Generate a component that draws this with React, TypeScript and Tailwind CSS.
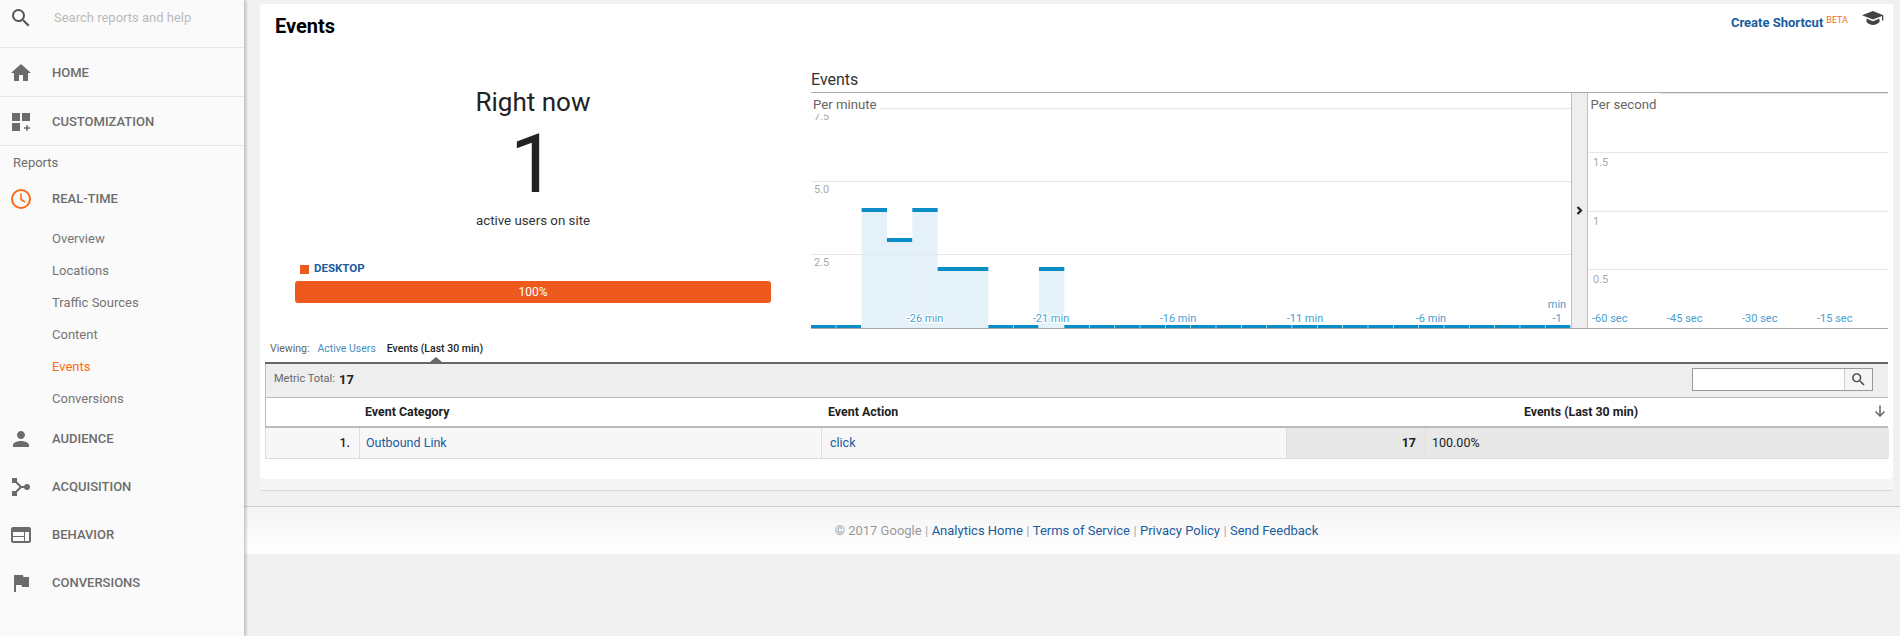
import { MdSearch, MdHome, MdPerson, MdWeb, MdFlag } from "react-icons/md";

const minuteTops: Record<number, number> = { 2: 115, 3: 145, 4: 115, 5: 174, 6: 174, 9: 174 };
const minuteStep = 25.33;
const minuteLabels = [
  { x: 114, t: "-26 min" },
  { x: 240, t: "-21 min" },
  { x: 367, t: "-16 min" },
  { x: 494, t: "-11 min" },
  { x: 620, t: "-6 min" },
];
const subItems = ["Overview", "Locations", "Traffic Sources", "Content", "Events", "Conversions"];

function NavRow({ icon, label, top }: { icon: React.ReactNode; label: string; top?: boolean }) {
  return (
    <div className={`flex h-[48px] items-center ${top ? "pt-[2px]" : ""}`}>
      <div className="ml-[9px] h-[24px] w-[24px] shrink-0 text-[#6b6b6b]">{icon}</div>
      <span className="ml-[19px] text-[13px] font-medium text-[#6d6d6d]">{label}</span>
    </div>
  );
}

function Sidebar() {
  return (
    <aside className="relative z-10 h-full w-[244px] shrink-0 bg-[#fafafa] shadow-[2px_0_3px_rgba(0,0,0,0.22)]">
      <div className="flex h-[48px] items-center border-b border-[#e5e5e5] pb-[11px]">
        <MdSearch className="ml-[9px] text-[#555555]" size={24} />
        <span className="ml-[21px] text-[13px] text-[#bbbbbb]">Search reports and help</span>
      </div>
      <div className="border-b border-[#e5e5e5]">
        <NavRow top icon={<MdHome size={24} />} label="HOME" />
      </div>
      <div className="border-b border-[#e5e5e5]">
        <NavRow
          top
          label="CUSTOMIZATION"
          icon={
            <svg width="24" height="24" viewBox="0 0 24 24" fill="currentColor">
              <rect x="3" y="3" width="8" height="8" />
              <rect x="13" y="3" width="8" height="8" />
              <rect x="3" y="13" width="8" height="8" />
              <path d="M17.3 15h1.4v2.3H21v1.4h-2.3V21h-1.4v-2.3H15v-1.4h2.3z" />
            </svg>
          }
        />
      </div>
      <div className="flex h-[29px] items-center pl-[13px] pt-[5px] text-[13px] text-[#6d6d6d]">Reports</div>
      <NavRow
        label="REAL-TIME"
        icon={
          <svg width="24" height="24" viewBox="0 0 24 24" fill="none" stroke="#fb6a13" strokeWidth="2">
            <circle cx="12" cy="12" r="9" />
            <path d="M12 6.5V12.5L16 15" strokeWidth="1.6" />
          </svg>
        }
      />
      <div className="flex flex-col">
        {subItems.map((s) => (
          <div
            key={s}
            className={`flex h-[32px] items-center pl-[52px] text-[13px] ${s === "Events" ? "text-[#fb6a13]" : "text-[#757575]"}`}
          >
            {s}
          </div>
        ))}
      </div>
      <NavRow icon={<MdPerson size={24} />} label="AUDIENCE" />
      <NavRow
        label="ACQUISITION"
        icon={
          <svg width="24" height="24" viewBox="0 0 24 24" fill="currentColor">
            <rect x="3" y="3" width="5" height="5" />
            <rect x="3" y="16" width="5" height="5" />
            <circle cx="18" cy="12" r="3" />
            <path d="M6 6L12 12H18M6 18L12 12" fill="none" stroke="currentColor" strokeWidth="2" />
          </svg>
        }
      />
      <NavRow icon={<MdWeb size={24} />} label="BEHAVIOR" />
      <NavRow icon={<MdFlag size={24} />} label="CONVERSIONS" />
    </aside>
  );
}

function PageHeader() {
  return (
    <div className="flex h-[44px] items-start justify-between pl-[15px] pr-[9px]">
      <h1 className="mt-[11px] text-[20px] font-bold leading-[22px] text-black">Events</h1>
      <div className="mt-[7px] flex items-start">
        <span className="mt-[4px] text-[13px] font-bold leading-[16px] text-[#1a5c9e]">Create Shortcut</span>
        <span className="ml-[3px] mt-[3px] text-[9px] leading-[12px] text-[#e8702a]">BETA</span>
        <svg className="ml-[14px]" width="22" height="14" viewBox="0 0 22 14" fill="#444444">
          <path d="M11 0L0 4.2L11 8.6L20 5V9.5H21.3V4.2Z" />
          <path d="M4.5 7.6V11C6 12.6 8.5 14 11 14C13.5 14 16 12.6 17.5 11V7.6L11 10.2Z" />
        </svg>
      </div>
    </div>
  );
}

function Summary() {
  return (
    <div className="ml-[35px] flex w-[476px] shrink-0 flex-col">
      <div className="mt-[39px] h-[30px] text-center text-[26px] leading-[30px] text-[#222222]">Right now</div>
      <div className="h-[96px] text-center text-[82px] font-normal leading-[95px] text-[#222222]">1</div>
      <div className="h-[16px] text-center text-[13.3px] leading-[16px] text-[#333333]">active users on site</div>
      <div className="mt-[32px] flex h-[16px] items-center pl-[5px]">
        <span className="h-[9px] w-[9px] bg-[#ee5a1e]" />
        <span className="ml-[5px] text-[11.5px] font-bold text-[#1a5c9e]">DESKTOP</span>
      </div>
      <div className="mt-[4px] flex h-[22px] items-center justify-center rounded-[3px] bg-[#ee5a1e] text-[12px] text-white">
        100%
      </div>
    </div>
  );
}

function MinuteChart() {
  const halo = { paintOrder: "stroke" as const, stroke: "white", strokeWidth: 2.5 };
  return (
    <svg className="block shrink-0" width="760" height="235" viewBox="0 0 760 235" style={{ fontFamily: "Roboto, sans-serif" }}>
      {[15.5, 88.5, 161.5].map((y) => (
        <line key={y} x1="0" x2="760" y1={y} y2={y} stroke="#e6e6e6" />
      ))}
      <text x="3" y="27" fontSize="11" fill="#aaaaaa">7.5</text>
      <rect x="0" y="8" width="69" height="13" fill="white" />
      <text x="2" y="16" fontSize="13.2" fill="#666666">Per minute</text>
      <text x="3" y="100" fontSize="11" fill="#aaaaaa">5.0</text>
      <text x="3" y="173" fontSize="11" fill="#aaaaaa">2.5</text>
      {Array.from({ length: 30 }, (_, i) => {
        const x = i * minuteStep;
        const top = minuteTops[i];
        if (top === undefined) {
          return <rect key={i} x={x} y="232" width={minuteStep - 0.6} height="3" fill="#0a8cc6" />;
        }
        return (
          <g key={i}>
            <rect x={x} y={top} width={minuteStep} height={235 - top} fill="#d9ebf5" fillOpacity="0.7" />
            <rect x={x} y={top} width={minuteStep} height="4" fill="#0a8cc6" />
          </g>
        );
      })}
      {minuteLabels.map((l) => (
        <text key={l.t} x={l.x} y="229" textAnchor="middle" fontSize="11" fill="#4a9ed0" style={halo}>
          {l.t}
        </text>
      ))}
      <text x="746" y="215" textAnchor="middle" fontSize="11" fill="#4a9ed0">min</text>
      <text x="746" y="229" textAnchor="middle" fontSize="11" fill="#4a9ed0">-1</text>
    </svg>
  );
}

function SecondChart() {
  return (
    <svg className="block shrink-0" width="300" height="235" viewBox="0 0 300 235" style={{ fontFamily: "Roboto, sans-serif" }}>
      <rect x="72" y="0" width="228" height="1" fill="#e6e6e6" />
      {[59.5, 118.5, 176.5].map((y) => (
        <line key={y} x1="0" x2="300" y1={y} y2={y} stroke="#e6e6e6" />
      ))}
      <text x="2.5" y="16" fontSize="13.2" fill="#666666">Per second</text>
      <text x="5" y="73" fontSize="11" fill="#aaaaaa">1.5</text>
      <text x="5" y="132" fontSize="11" fill="#aaaaaa">1</text>
      <text x="5" y="190" fontSize="11" fill="#aaaaaa">0.5</text>
      {[
        { x: 4, t: "-60 sec" },
        { x: 79, t: "-45 sec" },
        { x: 154, t: "-30 sec" },
        { x: 229, t: "-15 sec" },
      ].map((l) => (
        <text key={l.t} x={l.x} y="229" fontSize="11" fill="#4a9ed0">{l.t}</text>
      ))}
    </svg>
  );
}

function Charts() {
  return (
    <div className="ml-[40px] flex w-[1077px] shrink-0 flex-col">
      <div className="flex h-[45px] items-end border-b border-[#aaaaaa] pb-[2px] text-[16px] leading-[20px] text-[#333333]">
        Events
      </div>
      <div className="flex h-[236px] border-b border-[#aaaaaa]">
        <MinuteChart />
        <div className="flex w-[17px] shrink-0 items-center justify-center border-x border-[#c0c0c0] bg-[#eeeeee]">
          <svg width="7" height="9" viewBox="0 0 7 9" fill="none" stroke="#222222" strokeWidth="2.2">
            <path d="M1.5 1L5 4.5L1.5 8" />
          </svg>
        </div>
        <SecondChart />
      </div>
    </div>
  );
}

const gridCols = "grid grid-cols-[94px_462px_464px_140px_463px]";

function DataTable() {
  return (
    <div className="px-[5px]">
      <div className="flex h-[28px] items-center pt-[2px] text-[10.5px]">
        <span className="ml-[5px] text-[#666666]">Viewing:</span>
        <span className="ml-[8px] text-[#4a8dc0]">Active Users</span>
        <span className="ml-[11px] font-medium text-[#222222]">Events (Last 30 min)</span>
      </div>
      <div className="relative border-t-2 border-[#666666]">
        <span className="absolute left-[165px] top-[-7px] h-0 w-0 border-x-[6px] border-b-[5px] border-x-transparent border-b-[#666666]" />
        <div className="flex h-[34px] items-center justify-between border-b border-l border-[#bbbbbb] bg-[#eeeeee] pb-[2px]">
          <div className="ml-[8px] flex items-center text-[11px] text-[#666666]">
            Metric Total:
            <span className="ml-[4px] text-[13px] font-bold text-[#222222]">17</span>
          </div>
          <div className="mr-[15px] flex h-[23px] w-[181px] border border-[#999999] bg-white">
            <div className="flex-1" />
            <div className="flex w-[28px] items-center justify-center border-l border-[#cccccc] bg-[#f5f5f5]">
              <MdSearch size={17} className="text-[#444444]" />
            </div>
          </div>
        </div>
        <div className={`${gridCols} h-[30px] items-center border-b-2 border-l border-[#bbbbbb] pt-[1px] text-[12.4px] font-bold text-[#222222]`}>
          <div />
          <div className="pl-[5px]">Event Category</div>
          <div className="pl-[6px]">Event Action</div>
          <div className="relative col-span-2 flex justify-center pr-[13px]">
            Events (Last 30 min)
            <svg className="absolute right-[3px] top-[2px]" width="12" height="12" viewBox="0 0 12 12" fill="none" stroke="#666666" strokeWidth="1.5">
              <path d="M6 0.5V11M1.5 6.5L6 11L10.5 6.5" />
            </svg>
          </div>
        </div>
        <div className={`${gridCols} h-[31px] border-x border-b border-[#dddddd] text-[12.5px]`}>
          <div className="flex items-center justify-end border-r border-[#dddddd] bg-[#f7f7f7] pr-[9px] font-medium text-[#222222]">1.</div>
          <div className="flex items-center border-r border-[#dddddd] bg-[#f7f7f7] pl-[6px] text-[#1a5c9e]">Outbound Link</div>
          <div className="flex items-center bg-[#f7f7f7] pl-[8px] text-[#1a5c9e]">click</div>
          <div className="flex items-center justify-end border-x border-[#dddddd] bg-[#e8e8e8] pr-[9px] font-bold text-[#222222]">17</div>
          <div className="flex items-center bg-[#e8e8e8] pl-[6px] text-[#222222]">100.00%</div>
        </div>
      </div>
    </div>
  );
}

function Footer() {
  const sep = <span className="mx-[3.4px] text-[#aaaaaa]">|</span>;
  return (
    <footer className="mt-[15px] flex h-[48px] items-center justify-center border-t border-[#cccccc] bg-gradient-to-b from-[#f4f4f4] to-white pl-[9px] text-[13px] text-[#1a5c9e]">
      <span className="text-[#999999]">© 2017 Google</span>
      {sep}
      <span>Analytics Home</span>
      {sep}
      <span>Terms of Service</span>
      {sep}
      <span>Privacy Policy</span>
      {sep}
      <span>Send Feedback</span>
    </footer>
  );
}

export default function App() {
  return (
    <div className="flex h-screen w-full overflow-hidden bg-[#f1f1f1] font-['Roboto',sans-serif]">
      <Sidebar />
      <main className="min-w-0 flex-1 pt-[4px]">
        <div className="ml-[16px] mr-[7px]">
          <div className="h-[475px] rounded-[3px] bg-white">
            <PageHeader />
            <div className="flex h-[286px]">
              <Summary />
              <Charts />
            </div>
            <DataTable />
          </div>
          <div className="h-[12px] border-b border-[#d8d8d8] bg-[#f5f5f5]" />
        </div>
        <Footer />
      </main>
    </div>
  );
}
